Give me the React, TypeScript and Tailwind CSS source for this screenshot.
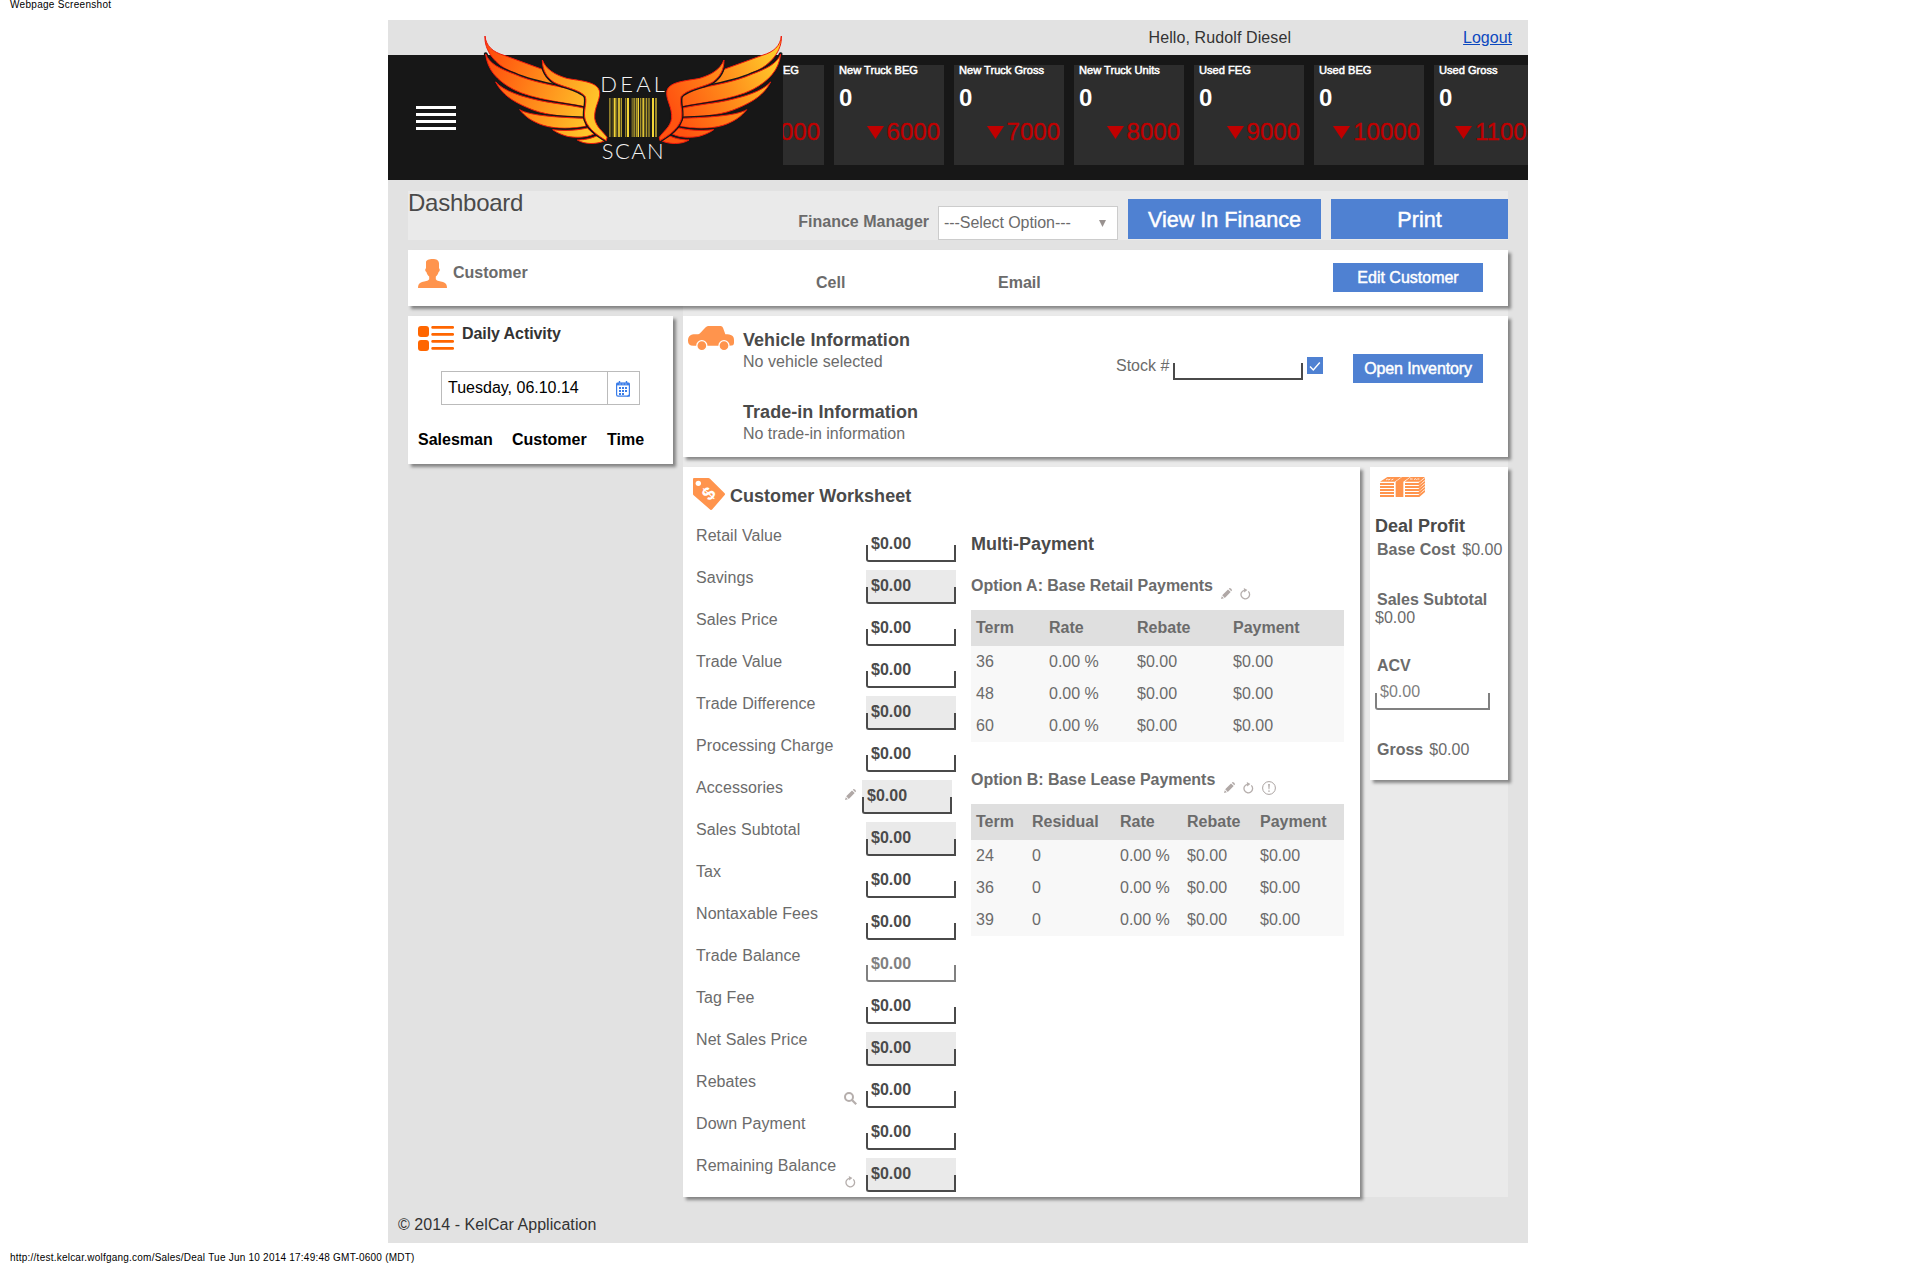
import React from "react";

const FEATHERS = [
  "M315 108 C318 138 338 156 372 166 L487 208 C496 228 510 246 537 258 C480 250 440 238 400 217 C345 196 312 150 315 108Z",
  "M317 162 C328 192 362 207 402 222 C455 246 520 256 568 266 C592 272 612 280 614 290 L614 320 C560 308 462 300 400 268 C352 242 322 210 317 162Z",
  "M347 246 C372 274 425 290 480 302 C530 312 580 316 613 325 L612 352 C545 350 490 345 440 322 C400 304 368 286 347 246Z",
  "M419 329 C450 348 540 352 612 355 L618 379 C575 386 530 388 490 376 C455 364 436 350 419 329Z",
  "M518 389 C560 394 595 390 622 384 L642 402 C620 413 590 414 562 409 C545 404 530 398 518 389Z",
  "M592 420 C618 420 636 414 652 407 L673 423 C650 433 615 434 592 420Z",
  "M487 180 C498 208 524 224 560 235 C600 243 657 244 659 278 C660 302 642 322 644 355 C648 382 670 395 681 412 L679 422 C655 408 626 388 616 360 C608 335 622 310 616 290 C600 268 550 262 522 247 C500 232 487 210 487 180Z",
];

const BARS: [number, number, number][] = [
  [687, 5, 0.55], [695, 3, 0.3], [701, 6, 1], [709, 3, 0.6], [714, 7, 0.85], [723, 3, 0.7],
  [735, 4, 0.55], [741, 6, 1], [755, 3, 0.6], [760, 6, 0.6], [768, 4, 0.7], [773, 4, 1],
  [780, 4, 0.6], [787, 6, 0.9], [797, 4, 0.7], [803, 7, 0.45], [816, 6, 1], [825, 6, 0.6],
];

function Wing() {
  return (
    <>
      {FEATHERS.map((d, i) => (
        <g key={d}>
          {i > 0 && <path d={d} fill="none" stroke="#171717" strokeWidth="11" />}
          <path d={d} stroke="#f01a0c" strokeWidth="3" />
        </g>
      ))}
    </>
  );
}

function Logo() {
  return (
    <svg className="block h-[128px] w-[300px] overflow-visible" viewBox="312 102 900 384">
      <defs>
        <linearGradient id="wingL" gradientUnits="userSpaceOnUse" x1="320" y1="180" x2="650" y2="300">
          <stop offset="0" stopColor="#ff4d0d" />
          <stop offset="0.5" stopColor="#ff8a1a" />
          <stop offset="1" stopColor="#ffc42a" />
        </linearGradient>
        <linearGradient id="wingR" gradientUnits="userSpaceOnUse" x1="640" y1="330" x2="330" y2="180">
          <stop offset="0" stopColor="#ff5310" />
          <stop offset="0.5" stopColor="#ff8a1a" />
          <stop offset="1" stopColor="#ffc92a" />
        </linearGradient>
      </defs>
      <g fill="url(#wingL)" strokeLinejoin="round"><Wing /></g>
      <g transform="translate(1519 0) scale(-1 1)" fill="url(#wingR)" strokeLinejoin="round"><Wing /></g>
      {BARS.map(([x, w, o]) => <rect key={x} x={x} y="294" width={w} height="117" fill="#f2d437" opacity={o} />)}
      <g fill="#f4f4f4" fontFamily="Lato, 'Liberation Sans', sans-serif" fontWeight="300" fontSize="66">
        <text x="661" y="277" textLength="194">DEAL</text>
        <text x="665" y="478" textLength="186">SCAN</text>
      </g>
    </svg>
  );
}

const Person = () => (
  <svg className="block h-[29px] w-[29px]" viewBox="0 0 29 29" fill="#ff944d">
    <path d="M14.5 0C18.5 0 21 1.4 21 4.5V9.2C22.2 9.6 22 12.6 20.6 13C20 15.4 19 16.4 17.8 17.6V20.2C19 22.2 22 22 25 23C28.2 24.2 29 26 29 29H0C0 26 .8 24.2 4 23C7 22 10 22.2 11.2 20.2V17.6C10 16.4 9 15.4 8.4 13C7 12.6 6.8 9.6 8 9.2V3.2C8.2 .8 11 0 14.5 0Z" />
  </svg>
);

const ListIcon = () => (
  <svg className="block h-[25px] w-[36px]" viewBox="0 0 36 25" fill="#ff6600">
    <rect width="11" height="11" rx="3" />
    <rect y="14" width="11" height="11" rx="3" />
    {[0, 7, 14, 21].map((y) => <rect key={y} x="13.3" y={y} width="22.7" height="2.8" rx="1.2" />)}
  </svg>
);

const Calendar = () => (
  <svg className="block h-[16px] w-[14px]" viewBox="0 0 14 16">
    <rect x=".6" y="2" width="12.8" height="13.2" rx="1.4" fill="#fff" stroke="#3b7de8" strokeWidth="1.2" />
    <path d="M.5 1.8h13V4.4H.5z" fill="#3b7de8" />
    <path d="M3.5 0v2.5M10.5 0v2.5" stroke="#3b7de8" strokeWidth="1.4" />
    <path d="M3.5 3h1M6.5 3h1M9.5 3h1" stroke="#fff" strokeWidth=".8" />
    {[6, 9, 12].map((y, r) =>
      [3, 6, 9].map((x, c) => (r === 2 && c === 2 ? null : <rect key={`${x}-${y}`} x={x} y={y} width="2" height="2" fill="#3b7de8" />)),
    )}
    <path d="M10.5 15.5L14 12.5V15.5Z" fill="#3b7de8" />
  </svg>
);

const Car = () => (
  <svg className="block h-[25px] w-[46px]" viewBox="54 78 138 75" fill="#ff944d">
    <path d="M54 122C54 108 62 103 76 103H84C92 103 104 78 116 78H152Q157 78 159 83L166 103C184 103 192 108 192 120V128C192 135 188 137 178 137H70C59 137 54 132 54 122Z" />
    <circle cx="95.5" cy="137" r="15" stroke="#fff" strokeWidth="4" />
    <circle cx="162" cy="137" r="15" stroke="#fff" strokeWidth="4" />
  </svg>
);

const Tag = () => (
  <svg className="block h-[32px] w-[32px]" viewBox="0 0 96 96">
    <path d="M3 0H46Q49 0 51 2L95 46Q97 49 95 51L58 94Q55 97 52 95L2 52Q0 50 0 48V3Q0 0 3 0Z" fill="#ff944d" />
    <circle cx="16" cy="16" r="8" fill="#fff" />
    <text x="46" y="66" transform="rotate(-47 46 46)" textAnchor="middle" fontSize="56" fontWeight="700" fill="#fff">$</text>
  </svg>
);

const Money = () => (
  <svg className="block h-[20px] w-[45px]" viewBox="0 0 135 60" fill="#ff944d">
    <path d="M22 0H64L44 14H0Z" />
    <path d="M92 0H135L118 14H74Z" />
    <path d="M66 0H90L70 14V60H47V14Z" />
    {[18, 27, 36, 45, 54].map((y) => (
      <g key={y}>
        <rect y={y} width="42" height="6" />
        <path d={`M75 ${y}H115L135 ${y - 15}V${y - 9}L118 ${y + 6}H75Z`} />
      </g>
    ))}
    <path d="M18 9l5-3 3 3 5-3M34 9l6-3M90 6h8M102 8l4-3 4 3M112 6h6" fill="none" stroke="#fff" strokeWidth="2.5" />
  </svg>
);

const Pencil = () => (
  <svg className="block h-[11px] w-[11px]" viewBox="0 0 11 11" fill="#b0a8a6">
    <path d="M0 11L.8 8.2L2.9 10.2ZM1.2 7.3L7 1.4L9.7 4L3.8 9.9ZM7.8 .8L8.7 0Q10.8 .2 11 2.3L10.3 3.3Z" />
  </svg>
);

const Refresh = () => (
  <svg className="block h-[12px] w-[11px]" viewBox="0 0 11 12">
    <path d="M8.3 3.4A4.3 4.3 0 1 1 4.3 2.3" fill="none" stroke="#b5aeac" strokeWidth="1.3" />
    <path d="M3.8 0L7.4 2L4.2 4.4Z" fill="#b5aeac" />
  </svg>
);

const Search = () => (
  <svg className="-ml-px block h-[13px] w-[13px]" viewBox="0 0 13 13" fill="none" stroke="#b5aeac">
    <circle cx="5" cy="5" r="4" strokeWidth="2" />
    <path d="M8.2 8.2L12.2 12.2" strokeWidth="2.2" />
  </svg>
);

const Warn = () => (
  <svg className="block h-[14px] w-[14px]" viewBox="0 0 14 14">
    <circle cx="7" cy="7" r="6.4" fill="none" stroke="#aaa3a1" strokeWidth="1" />
    <path d="M6.2 3H7.8L7.4 8.2H6.6ZM6.3 9.4H7.7V10.8H6.3Z" fill="#aaa3a1" />
  </svg>
);

const TICKER: [string, string][] = [
  ["New Truck FEG", "5000"], ["New Truck BEG", "6000"], ["New Truck Gross", "7000"], ["New Truck Units", "8000"],
  ["Used FEG", "9000"], ["Used BEG", "10000"], ["Used Gross", "11000"],
];

function TickerCard({ label, value }: { label: string; value: string }) {
  const clipped = label === "New Truck FEG";
  return (
    <div className="h-[100px] w-[110px] shrink-0 bg-[#2d2d2d]">
      <div className={"h-[11px] whitespace-nowrap text-[11.1px] leading-[11px] text-white [-webkit-text-stroke:0.5px_white] " + (clipped ? "pr-[25px] text-right" : "pl-[5px]")}>{label}</div>
      <div className="mt-[10px] pl-[5px] text-[24px] font-bold leading-[24px] text-white">0</div>
      <div className="mt-[10px] flex justify-end gap-[3px] pr-1 text-[24px] leading-[24px] text-[#c00000] [-webkit-text-stroke:0.3px_#c00000]">
        <svg className="mt-[6px] h-[13px] w-[17px]" viewBox="0 0 17 13"><path d="M0 0H17L8.5 13Z" fill="#c00000" /></svg>
        <span>{value}</span>
      </div>
    </div>
  );
}

function Bracket({ width, bg, color, bold = true }: { width: string; bg?: string; color?: string; bold?: boolean }) {
  return (
    <div className={`relative h-[34px] pl-[5px] leading-[31px] ${width} ${bg ?? ""} ${color ?? "border-[#4a4a4a] text-[#4a4a4a]"} ${bold ? "font-bold" : ""}`}>
      $0.00
      <div className="absolute inset-x-0 bottom-0 h-[17px] rounded-bl-[3px] border-2 border-t-0 border-inherit" />
    </div>
  );
}

type Row = { label: string; gray?: boolean; icon?: "pencil" | "search" | "refresh"; muted?: boolean };
const ROWS: Row[] = [
  { label: "Retail Value" }, { label: "Savings", gray: true }, { label: "Sales Price" }, { label: "Trade Value" },
  { label: "Trade Difference", gray: true }, { label: "Processing Charge" },
  { label: "Accessories", gray: true, icon: "pencil" }, { label: "Sales Subtotal", gray: true }, { label: "Tax" },
  { label: "Nontaxable Fees" }, { label: "Trade Balance", muted: true }, { label: "Tag Fee" },
  { label: "Net Sales Price", gray: true }, { label: "Rebates", icon: "search" }, { label: "Down Payment" },
  { label: "Remaining Balance", gray: true, icon: "refresh" },
];

function PayTable({ cols, head, rows }: { cols: string; head: string[]; rows: string[][] }) {
  return (
    <div className="w-[373px] bg-[#f8f8f8]">
      <div className={`grid bg-[#dfdfdf] pl-[5px] font-bold leading-[36px] ${cols}`}>
        {head.map((h) => <div key={h}>{h}</div>)}
      </div>
      {rows.map((r) => (
        <div key={r[0]} className={`grid pl-[5px] leading-[32px] ${cols}`}>
          {r.map((c, i) => <div key={i}>{c}</div>)}
        </div>
      ))}
    </div>
  );
}

const CARD = "bg-white shadow-[3px_3px_3px_rgba(0,0,0,0.42)]";
const BTN = "bg-[#4f81d2] text-center text-white [-webkit-text-stroke:0.45px_white] whitespace-nowrap";

export default function App() {
  return (
    <div className="flex h-[1263px] w-[1916px] flex-col bg-white font-['Liberation_Sans',Arial,sans-serif] text-[16px] text-[#6b6b6b]">
      <div className="h-5 pl-[10px] text-[10px] leading-[9px] tracking-[0.3px] text-black">Webpage Screenshot</div>

      <div className="ml-[388px] h-[1223px] w-[1140px] bg-[#e2e2e2]">
        <div className="flex h-[35px] justify-end leading-[35px] text-[#333]">
          <span className="tracking-[0.1px]">Hello, Rudolf Diesel</span>
          <a className="ml-[172px] mr-[16px] text-[#0b48bf] underline">Logout</a>
        </div>

        <header className="relative flex h-[125px] bg-[#171717]">
          <div className="ml-7 mt-[51px] flex w-10 flex-col gap-1">
            {[0, 1, 2, 3].map((i) => <div key={i} className="h-[3px] bg-white" />)}
          </div>
          <div className="absolute left-[96px] top-[-21px]"><Logo /></div>
          <div className="ml-auto mt-[10px] flex h-[100px] w-[745px] gap-[10px] overflow-hidden">
            <div className="-ml-[69px] flex gap-[10px]">
              {TICKER.map(([l, v]) => <TickerCard key={l} label={l} value={v} />)}
            </div>
          </div>
        </header>

        <div className="mx-5 mt-[11px] flex h-[49px] bg-[#eaeaea]">
          <h1 className="text-[24px] leading-[24px] tracking-[-0.25px] text-[#4a4a4a]">Dashboard</h1>
          <div className="ml-auto mt-[20px] font-bold leading-[22px]">Finance Manager</div>
          <div className="ml-[9px] mt-[15px] flex h-[34px] w-[180px] items-center justify-between border border-[#ccc] bg-white pl-[5px] pr-[11px]">
            <span className="leading-[32px] tracking-[-0.07px]">---Select Option---</span>
            <svg className="h-[7px] w-[7px]" viewBox="0 0 7 7"><path d="M0 0H7L3.5 7Z" fill="#999290" /></svg>
          </div>
          <button className={`ml-[10px] mt-2 h-10 w-[193px] text-[21.6px] leading-[41px] ${BTN}`}>View In Finance</button>
          <button className={`ml-[10px] mt-2 h-10 w-[177px] text-[21.6px] leading-[41px] ${BTN}`}>Print</button>
        </div>

        <div className="ml-5 grid w-[1100px] grid-cols-[275px_825px] grid-rows-[76px_891px] pt-[10px]">
          <div className={`relative z-0 col-span-2 mb-[20px] flex h-[56px] ${CARD}`}>
            <div className="ml-[10px] mt-[9px]"><Person /></div>
            <div className="ml-[6px] mt-[13px] w-[363px] font-bold leading-[20px]">Customer</div>
            <div className="mt-[23px] w-[182px] font-bold leading-[20px]">Cell</div>
            <div className="mt-[23px] font-bold leading-[20px]">Email</div>
            <button className={`ml-auto mr-[25px] mt-[13px] h-[29px] w-[150px] leading-[29px] ${BTN}`}>Edit Customer</button>
          </div>

          <div className="-mt-[10px]">
            <div className={`h-[148px] w-[265px] pl-[10px] pt-[10px] ${CARD}`}>
              <div className="flex h-[45px]">
                <ListIcon />
                <div className="-mt-[2px] ml-2 font-bold leading-[20px] tracking-[-0.08px] text-[#333]">Daily Activity</div>
              </div>
              <div className="ml-[23px] flex h-[34px] w-[199px] border border-[#bbb] text-black">
                <div className="w-[166px] border-r border-[#bbb] pl-[6px] leading-[32px]">Tuesday, 06.10.14</div>
                <div className="pl-2 pt-[9px]"><Calendar /></div>
              </div>
              <div className="mt-[25px] grid grid-cols-[94px_95px_60px] font-bold leading-[20px] text-black">
                <div>Salesman</div><div>Customer</div><div>Time</div>
              </div>
            </div>
          </div>

          <div className="-mt-[20px] h-[891px] bg-[#eaeaea] pt-[10px]">
            <div className={`flex h-[141px] ${CARD}`}>
              <div className="ml-[5px] mt-[10px]"><Car /></div>
              <div className="ml-[9px] mt-[12px] w-[373px]">
                <h2 className="text-[18px] font-bold leading-[24px] tracking-[0.05px] text-[#4a4a4a]">Vehicle Information</h2>
                <p className="leading-[20px] tracking-[0.05px]">No vehicle selected</p>
                <h2 className="mt-[28px] text-[18px] font-bold leading-[24px] tracking-[0.05px] text-[#4a4a4a]">Trade-in Information</h2>
                <p className="leading-[20px] tracking-[-0.03px]">No trade-in information</p>
              </div>
              <div className="mt-[40px] w-[57px] leading-[20px]">Stock #</div>
              <div className="mt-[47px] h-[17px] w-[130px] border-2 border-t-0 border-[#4a4a4a]" />
              <div className="ml-1 mt-[41px] h-[17px] w-[16px] bg-[#4f81d2]">
                <svg className="h-[17px] w-[16px]" viewBox="0 0 16 17" fill="none" stroke="#fff" strokeWidth="1.4"><path d="M3 9.5L6.3 13L12.8 5.5" /></svg>
              </div>
              <button className={`ml-[30px] mt-[38px] h-[29px] w-[130px] leading-[29px] tracking-[-0.12px] ${BTN}`}>Open Inventory</button>
            </div>

            <div className="mt-[10px] flex items-start gap-[10px]">
              <div className={`h-[730px] w-[677px] ${CARD}`}>
                <div className="flex h-[59px] pl-[10px] pt-[11px]">
                  <Tag />
                  <h2 className="ml-[5px] mt-[6px] text-[18px] font-bold leading-[24px] tracking-[0.03px] text-[#4a4a4a]">Customer Worksheet</h2>
                </div>
                <div className="flex">
                  <div className="w-[275px] pl-[13px]">
                    {ROWS.map((r) => (
                      <div key={r.label} className="flex h-[42px]">
                        <div className="w-[149px] whitespace-nowrap leading-[20px] tracking-[0.08px]">{r.label}</div>
                        <div className={r.icon === "pencil" ? "w-[17px] pt-[11px]" : "w-[21px] pt-5"}>
                          {r.icon === "pencil" && <Pencil />}
                          {r.icon === "search" && <Search />}
                          {r.icon === "refresh" && <Refresh />}
                        </div>
                        <div className="pt-[2px]">
                          <Bracket width="w-[90px]" bg={r.gray ? "bg-[#eaeaea]" : ""} color={r.muted ? "border-[#808080] text-[#808080]" : undefined} />
                        </div>
                      </div>
                    ))}
                  </div>
                  <div className="ml-[13px] mt-[6px]">
                    <h2 className="text-[18px] font-bold leading-[24px] text-[#4a4a4a]">Multi-Payment</h2>
                    <div className="mt-[20px] flex h-[34px] font-bold leading-[20px] tracking-[-0.04px]">
                      <span className="w-[250px]">Option A: Base Retail Payments</span>
                      <span className="mt-3 flex gap-[8px]"><Pencil /><Refresh /></span>
                    </div>
                    <PayTable
                      cols="grid-cols-[73px_88px_96px_1fr]"
                      head={["Term", "Rate", "Rebate", "Payment"]}
                      rows={["36", "48", "60"].map((t) => [t, "0.00 %", "$0.00", "$0.00"])}
                    />
                    <div className="mt-[28px] flex h-[34px] font-bold leading-[20px] tracking-[-0.04px]">
                      <span className="w-[253px]">Option B: Base Lease Payments</span>
                      <span className="mt-3 flex gap-[8px]"><Pencil /><Refresh /><span className="-mt-px"><Warn /></span></span>
                    </div>
                    <PayTable
                      cols="grid-cols-[56px_88px_67px_73px_1fr]"
                      head={["Term", "Residual", "Rate", "Rebate", "Payment"]}
                      rows={["24", "36", "39"].map((t) => [t, "0", "0.00 %", "$0.00", "$0.00"])}
                    />
                  </div>
                </div>
              </div>

              <div className={`h-[313px] w-[138px] whitespace-nowrap pl-[5px] pt-[10px] leading-[18px] ${CARD}`}>
                <div className="ml-[5px]"><Money /></div>
                <h2 className="mt-[17px] text-[18px] font-bold leading-[24px] text-[#4a4a4a]">Deal Profit</h2>
                <div className="mt-[3px] pl-[2px]"><b>Base Cost</b><span className="ml-[7px]">$0.00</span></div>
                <div className="mt-[32px] pl-[2px] font-bold">Sales Subtotal</div>
                <div>$0.00</div>
                <div className="mt-[30px] pl-[2px] font-bold">ACV</div>
                <div className="mt-[1px]"><Bracket width="w-[115px]" bold={false} color="border-[#808080] text-[#808080]" /></div>
                <div className="mt-[31px] pl-[2px]"><b>Gross</b><span className="ml-[6px]">$0.00</span></div>
              </div>
            </div>
          </div>
        </div>
        <footer className="-mt-[2px] pl-[10px] leading-[20px] tracking-[0.06px] text-[#333]">© 2014 - KelCar Application</footer>
      </div>

      <div className="mt-[10px] pl-[10px] text-[10px] leading-[10px] tracking-[0.23px] text-black">
        http://test.kelcar.wolfgang.com/Sales/Deal Tue Jun 10 2014 17:49:48 GMT-0600 (MDT)
      </div>
    </div>
  );
}
